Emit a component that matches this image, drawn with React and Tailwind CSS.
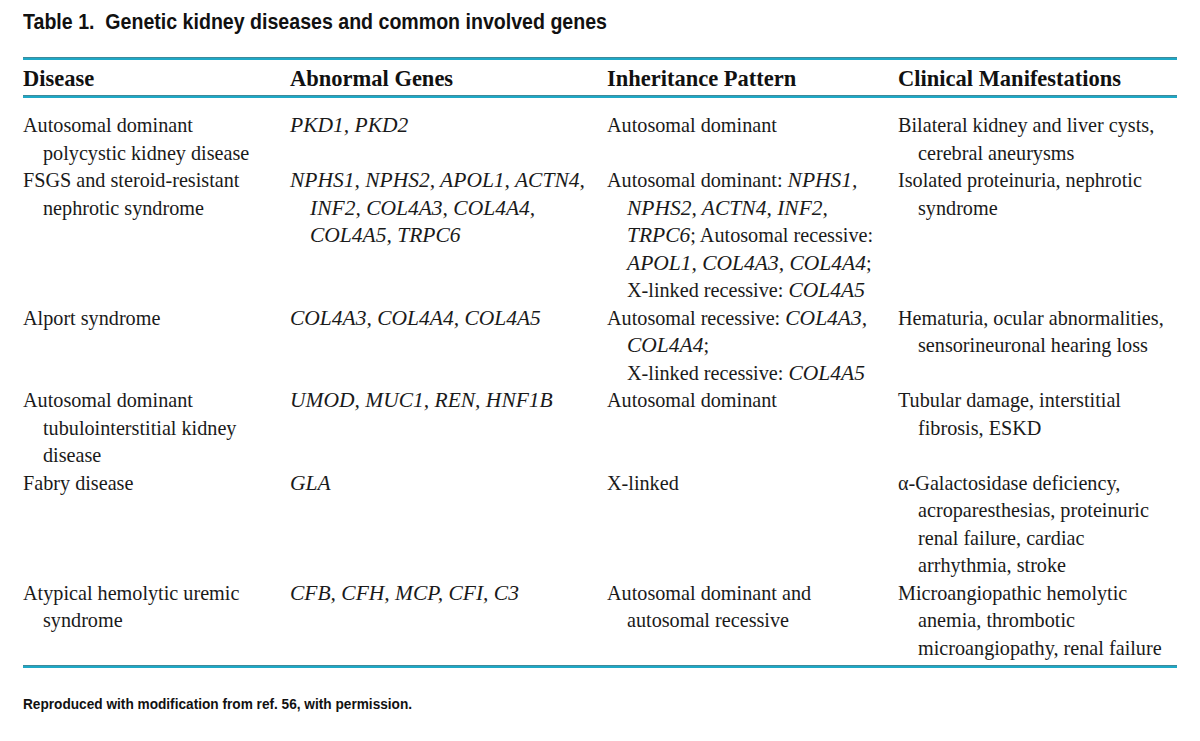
import React from "react";

const I = ({ children }) => <i className="text-[21.5px]">{children}</i>;

const rows = [
  {
    d: ["Autosomal dominant", "polycystic kidney disease"],
    g: [<I>PKD1, PKD2</I>],
    p: ["Autosomal dominant"],
    c: ["Bilateral kidney and liver cysts,", "cerebral aneurysms"],
  },
  {
    d: ["FSGS and steroid-resistant", "nephrotic syndrome"],
    g: [
      <I>NPHS1, NPHS2, APOL1, ACTN4,</I>,
      <I>INF2, COL4A3, COL4A4,</I>,
      <I>COL4A5, TRPC6</I>,
    ],
    p: [
      <>Autosomal dominant: <I>NPHS1,</I></>,
      <I>NPHS2, ACTN4, INF2,</I>,
      <><I>TRPC6</I>; Autosomal recessive:</>,
      <><I>APOL1, COL4A3, COL4A4</I>;</>,
      <>X-linked recessive: <I>COL4A5</I></>,
    ],
    c: ["Isolated proteinuria, nephrotic", "syndrome"],
  },
  {
    d: ["Alport syndrome"],
    g: [<I>COL4A3, COL4A4, COL4A5</I>],
    p: [
      <>Autosomal recessive: <I>COL4A3,</I></>,
      <><I>COL4A4</I>;</>,
      <>X-linked recessive: <I>COL4A5</I></>,
    ],
    c: ["Hematuria, ocular abnormalities,", "sensorineuronal hearing loss"],
  },
  {
    d: ["Autosomal dominant", "tubulointerstitial kidney", "disease"],
    g: [<I>UMOD, MUC1, REN, HNF1B</I>],
    p: ["Autosomal dominant"],
    c: ["Tubular damage, interstitial", "fibrosis, ESKD"],
  },
  {
    d: ["Fabry disease"],
    g: [<I>GLA</I>],
    p: ["X-linked"],
    c: [
      "α-Galactosidase deficiency,",
      "acroparesthesias, proteinuric",
      "renal failure, cardiac",
      "arrhythmia, stroke",
    ],
  },
  {
    d: ["Atypical hemolytic uremic", "syndrome"],
    g: [<I>CFB, CFH, MCP, CFI, C3</I>],
    p: ["Autosomal dominant and", "autosomal recessive"],
    c: [
      "Microangiopathic hemolytic",
      "anemia, thrombotic",
      "microangiopathy, renal failure",
    ],
  },
];

function Cell({ lines }) {
  return (
    <div className="flex flex-col">
      {lines.map((l, i) => (
        <div key={i} className={"whitespace-nowrap " + (i > 0 ? "pl-[20px]" : "")}>
          {l}
        </div>
      ))}
    </div>
  );
}

function Rule() {
  return (
    <div className="flex flex-col">
      <div className="h-px bg-[#3f8a9a]" />
      <div className="h-[2px] bg-[#1fa8c6]" />
    </div>
  );
}

export default function App() {
  return (
    <div className="w-[1200px] h-[741px] bg-white text-[#1a1a1a] pl-[23px] pr-[23px] pt-[9px] font-['Liberation_Sans',Arial,sans-serif]">
      <div className="text-[22px] leading-[26px] font-bold text-[#111] whitespace-nowrap">
        <span className="inline-block origin-left scale-x-[0.89]">
          Table 1.&nbsp; Genetic kidney diseases and common involved genes
        </span>
      </div>

      <div className="mt-[22px] w-[1154px] font-['Liberation_Serif','Times_New_Roman',Times,serif]">
        <Rule />
        <div className="grid grid-cols-[267px_317px_291px_279px] text-[22.5px] font-bold leading-[28px] pt-[5px] pb-[2px] text-[#111]">
          <div>Disease</div>
          <div>Abnormal Genes</div>
          <div>Inheritance Pattern</div>
          <div>Clinical Manifestations</div>
        </div>
        <Rule />
        <div className="flex flex-col pt-[14px] pb-[3px] text-[20.2px] leading-[27.5px]">
          {rows.map((r, i) => (
            <div key={i} className="grid grid-cols-[267px_317px_291px_279px]">
              <Cell lines={r.d} />
              <Cell lines={r.g} />
              <Cell lines={r.p} />
              <Cell lines={r.c} />
            </div>
          ))}
        </div>
        <Rule />
      </div>

      <div className="mt-[26px] text-[15px] leading-[20px] font-bold text-[#111] whitespace-nowrap">
        <span className="inline-block origin-left scale-x-[0.91]">
          Reproduced with modification from ref. 56, with permission.
        </span>
      </div>
    </div>
  );
}
